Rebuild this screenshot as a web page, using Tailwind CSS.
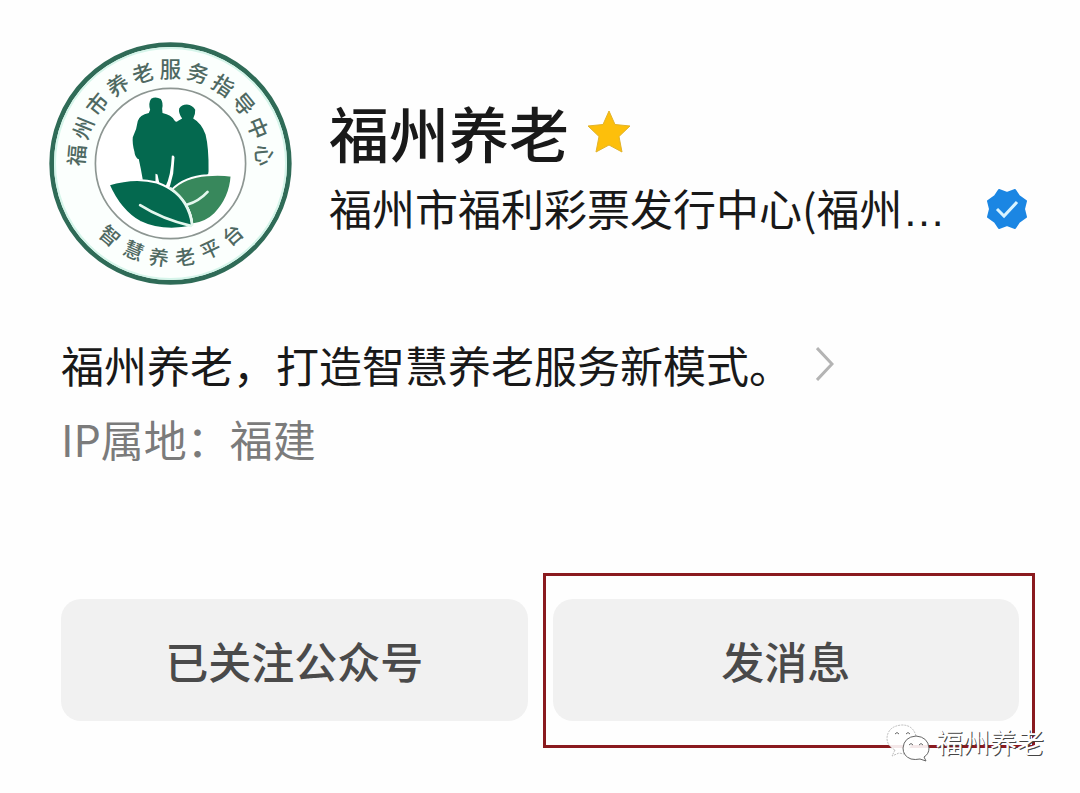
<!DOCTYPE html>
<html lang="zh-CN">
<head>
    <meta charset="UTF-8">
    <meta name="viewport" content="width=device-width, initial-scale=1.0">
    <title>福州养老</title>
    <script src="https://cdn.jsdelivr.net/npm/@tailwindcss/browser@4"></script>
</head>
<body class="bg-[#fefefe] font-['Noto_Sans_CJK_SC',sans-serif] text-[#191919]">
<main class="relative pt-[42px] pb-[45px]">
    <!-- Account header -->
    <header class="flex items-start pl-[49px] pr-[52px]">
        <svg class="w-[243px] h-[243px] shrink-0" viewBox="-364 -364 728 728" role="img" aria-label="福州市养老服务指导中心">
            <circle r="356" fill="#fbfffd" stroke="#2f6b57" stroke-width="14"/>
            <circle r="346" fill="none" stroke="#d5f5ea" stroke-width="6"/>
            <circle r="225" fill="#fff" stroke="#8d9692" stroke-width="5"/>
            <g fill="#4f6962" font-size="64" font-weight="500" text-anchor="middle">
                <text y="-258" transform="rotate(-85)">福</text>
                <text y="-258" transform="rotate(-68)">州</text>
                <text y="-258" transform="rotate(-51)">市</text>
                <text y="-258" transform="rotate(-34)">养</text>
                <text y="-258" transform="rotate(-17)">老</text>
                <text y="-258">服</text>
                <text y="-258" transform="rotate(17)">务</text>
                <text y="-258" transform="rotate(34)">指</text>
                <text y="-258" transform="rotate(51)">导</text>
                <text y="-258" transform="rotate(68)">中</text>
                <text y="-258" transform="rotate(85)">心</text>
            </g>
            <g fill="#4f6962" font-size="60" font-weight="500" text-anchor="middle">
                <text y="306" transform="rotate(40)">智</text>
                <text y="306" transform="rotate(23)">慧</text>
                <text y="306" transform="rotate(7)">养</text>
                <text y="306" transform="rotate(-9)">老</text>
                <text y="306" transform="rotate(-25)">平</text>
                <text y="306" transform="rotate(-41)">台</text>
            </g>
            <!-- Couple and leaves -->
            <g transform="translate(-391 -401)">
                <path fill="#04694f" d="M333 207Q347 199 362 208Q370 220 366 236L367 250Q394 256 403 272Q408 278 413 274L426 266Q414 250 417 236Q424 224 440 224Q458 226 465 240Q466 254 459 266Q484 280 496 314Q506 354 505 424L502 444L440 450L400 480L330 462L300 452L296 390Q284 382 283 366Q276 340 278 322Q290 300 293 274Q298 256 326 250L330 240Q324 220 333 207z"/>
                <path fill="#fff" d="M395 378q6-4 8 4l-4 50l-11 42l-12-4q16-30 19-92zM286 386l10 2q6 26 12 62h-18zM346 432l6 2 6 28-12-4z"/>
                <path fill="#38885c" stroke="#fff" stroke-width="6" d="M394 480q40-40 106-44q42-4 74 2q-4 66-50 114q-26 26-68 32q0-30-20-60q-18-26-42-44z"/>
                <path fill="#04694f" stroke="#fff" stroke-width="6" d="M206 464q78-24 144-6q64 24 90 70q14 26 16 62q-90 18-156-14q-60-34-94-112z"/>
                <path fill="none" stroke="#e4f7ee" stroke-width="8" stroke-linecap="round" d="M300 526q66 42 152 62M392 476q54 40 64 108M442 524q34-10 60-38"/>
            </g>
        </svg>
        <div class="ml-[37px] mt-[50px] min-w-0 grow">
            <div class="flex items-center gap-[18px]">
                <h1 class="text-[60px] leading-[80px] font-medium whitespace-nowrap">福州养老</h1>
                <svg class="w-[44px] h-[44px] shrink-0" viewBox="0 0 44 44" role="img" aria-label="星标">
                    <path fill="#fdbf0b" stroke="#e2b32a" stroke-width="1" stroke-linejoin="round" d="M22 1l6 13.500 15 1.500-11 10.500 3 15.500-13-7-13 7 3-15.500L1 16l15-1.500z"/>
                </svg>
            </div>
            <div class="flex items-center justify-between">
                <p class="text-[43px] leading-[70px] whitespace-nowrap">福州市福利彩票发行中心(福州<span class="font-['Liberation_Sans',sans-serif]">…</span></p>
                <svg class="w-[42px] h-[42px] shrink-0" viewBox="-21 -21 42 42" role="img" aria-label="已认证">
                    <path fill="#1b86e3" stroke="#1b86e3" stroke-width="2" stroke-linejoin="round" d="M-8-19L0-16L8-19L12-13L19-8L17 0L19 8L12 13L8 19L0 16L-8 19L-12 13L-19 8L-17 0L-19-8L-12-13z"/>
                    <path fill="none" stroke="#d9f4ff" stroke-width="3" d="M-10 0l7 7L10-7"/>
                </svg>
            </div>
        </div>
    </header>

    <!-- Introduction -->
    <section class="mt-[43px] px-[61px]">
        <a href="#" class="flex items-center gap-6">
            <span class="text-[43px] leading-[72px]">福州养老，打造智慧养老服务新模式。</span>
            <svg class="w-[18px] h-[34px] shrink-0" viewBox="0 0 18 34" fill="none" stroke="#b4b4b4" stroke-width="3">
                <path d="M1 1l15 16L1 33"/>
            </svg>
        </a>
        <p class="text-[43px] leading-[76px] text-[#7b7b7b]">IP属地：福建</p>
    </section>

    <!-- Actions -->
    <div class="mt-[123px] px-[61px] grid grid-cols-2 gap-[25px] text-[#4a4a4a]">
        <button type="button" class="h-[122px] rounded-[20px] bg-[#f1f1f1] text-[43px] font-medium">已关注公众号</button>
        <div class="relative">
            <button type="button" class="w-full h-[122px] rounded-[20px] bg-[#f1f1f1] text-[43px] font-medium">发消息</button>
            <div class="absolute -top-[26px] -bottom-[27px] -left-[10px] -right-[16px] border-3 border-[#8a1a1e] pointer-events-none"></div>
        </div>
    </div>

    <!-- Watermark -->
    <div class="absolute right-[36px] bottom-[4px] flex items-center gap-[6px]">
        <svg class="w-[44px] h-[40px]" viewBox="0 0 44 40" fill="#fff" fill-opacity="0.9" stroke="#666" stroke-width="1">
            <path stroke="#bbb" stroke-dasharray="2 1" d="M9 28l-3 6 7-3q4 1 7 1l10-18Q27 3 16 3Q2 4 1 16Q1 24 9 28z"/>
            <path d="M30 14q12 1 13 12q0 6-5 9l2 4-6-2q-5 1-9 0q-8-3-8-11q1-11 13-12z"/>
            <path fill="none" d="M9 12q2-3 4 0M20 12q2-3 4 0M23 23q2-3 4 0M33 23q2-3 4 0"/>
        </svg>
        <span class="text-[27px] leading-[40px] text-white [text-shadow:1px_1px_0_#444]">福州养老</span>
    </div>
</main>
</body>
</html>
